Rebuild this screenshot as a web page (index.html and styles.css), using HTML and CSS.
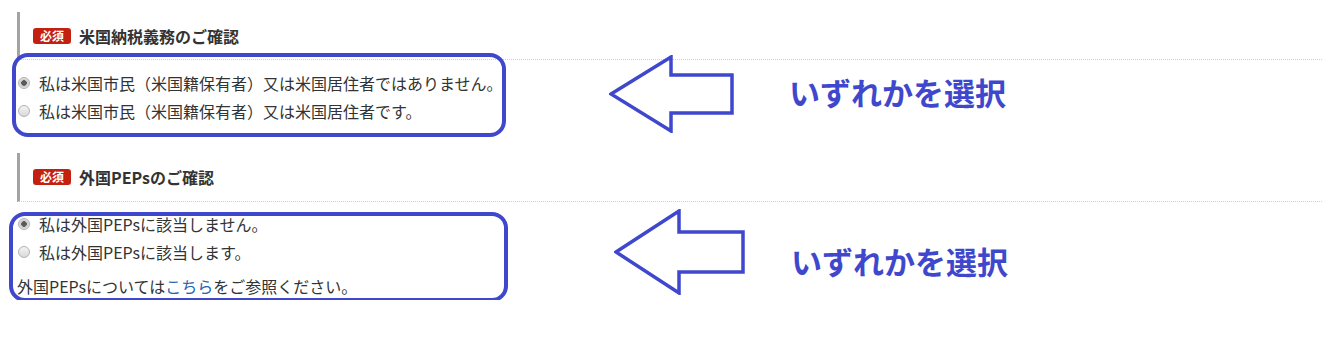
FILE: index.html
```html
<!DOCTYPE html>
<html lang="ja">
<head>
  <meta charset="UTF-8">
  <title>お客様情報のご確認</title>
  <link rel="stylesheet" href="styles.css">
</head>
<body>
<div class="form">

  <section class="item">
    <h3 class="item-head"><span class="req">必須</span>米国納税義務のご確認</h3>
    <div class="choices">
      <label class="choice"><input type="radio" name="usTax" checked>私は米国市民（米国籍保有者）又は米国居住者ではありません。</label>
      <label class="choice"><input type="radio" name="usTax">私は米国市民（米国籍保有者）又は米国居住者です。</label>
    </div>
    <div class="mark mark-tax"></div>
    <div class="note note-tax">
      <svg width="126" height="78" viewBox="0 0 126 78">
        <polygon points="2,39 62,2 62,20 123,20 123,58 62,58 62,76" />
      </svg>
      <span class="note-text">いずれかを選択</span>
    </div>
  </section>

  <section class="item">
    <h3 class="item-head"><span class="req">必須</span>外国PEPsのご確認</h3>
    <div class="choices">
      <label class="choice"><input type="radio" name="peps" checked>私は外国PEPsに該当しません。</label>
      <label class="choice"><input type="radio" name="peps">私は外国PEPsに該当します。</label>
      <p class="info">外国PEPsについては<a href="#">こちら</a>をご参照ください。</p>
    </div>
    <div class="mark mark-peps"></div>
    <div class="note note-peps">
      <svg width="132" height="86" viewBox="0 0 132 86">
        <polygon points="2,43 65,2 65,23 129,23 129,63 65,63 65,84" />
      </svg>
      <span class="note-text">いずれかを選択</span>
    </div>
  </section>

</div>
</body>
</html>
```

FILE: styles.css
```css
body {
  margin: 0;
  background: #fff;
  color: #333;
  font-family: "Noto Sans CJK JP", "Noto Sans", sans-serif;
  font-size: 16px;
}
.form {
  padding: 12px 16px 0 17px;
}
.item {
  position: relative;
}
.item + .item {
  margin-top: 28px;
}
.item-head {
  display: flex;
  align-items: center;
  gap: 8px;
  box-sizing: border-box;
  height: 48px;
  margin: 0;
  padding-left: 13px;
  border-left: 3px solid #a3a3a3;
  border-bottom: 1px dotted #cfcfcf;
  font-size: 16px;
  font-weight: bold;
  color: #333;
}
.item + .item .item-head {
  height: 49px;
}
.req {
  display: inline-block;
  width: 38px;
  height: 16px;
  line-height: 16px;
  border-radius: 3px;
  background: #c4200f;
  color: #fff;
  font-size: 12px;
  font-weight: bold;
  text-align: center;
}
.choices {
  margin-top: 9px;
}
.item + .item .choices {
  margin-top: 8px;
}
.choice {
  display: flex;
  align-items: center;
  height: 28px;
  line-height: 28px;
}
.choice input {
  appearance: none;
  -webkit-appearance: none;
  width: 12px;
  height: 12px;
  margin: 0 9px 0 1px;
  border: 1px solid #b3b3b3;
  border-radius: 50%;
  background: linear-gradient(#f4f4f4, #d9d9d9);
  box-sizing: border-box;
}
.choice input:checked {
  background: radial-gradient(circle, #5a5a5a 0 2.5px, #c9c9c9 3px, #eeeeee 6px);
}
.info {
  margin: 6px 0 0;
  line-height: 28px;
}
.info a {
  color: #2464b4;
  text-decoration: none;
}

/* 注釈（青枠・矢印） */
.mark {
  position: absolute;
  box-sizing: border-box;
  border: 4px solid #3f48cc;
  border-radius: 16px;
}
.mark-tax {
  left: -5px;
  top: 41px;
  width: 494px;
  height: 84px;
}
.mark-peps {
  left: -8px;
  top: 59px;
  width: 499px;
  height: 90px;
}
.note {
  position: absolute;
  display: flex;
  align-items: center;
}
.note svg polygon {
  fill: none;
  stroke: #3f48cc;
  stroke-width: 3.5;
  stroke-linejoin: miter;
}
.note-text {
  color: #3f48cc;
  font-size: 31px;
  font-weight: bold;
  white-space: nowrap;
}
.note-tax {
  left: 592px;
  top: 43px;
  gap: 54px;
}
.note-tax .note-text {
  margin-bottom: 6px;
}
.note-peps {
  left: 597px;
  top: 56px;
  gap: 45px;
}
.note-peps .note-text {
  margin-top: 16px;
}
```
